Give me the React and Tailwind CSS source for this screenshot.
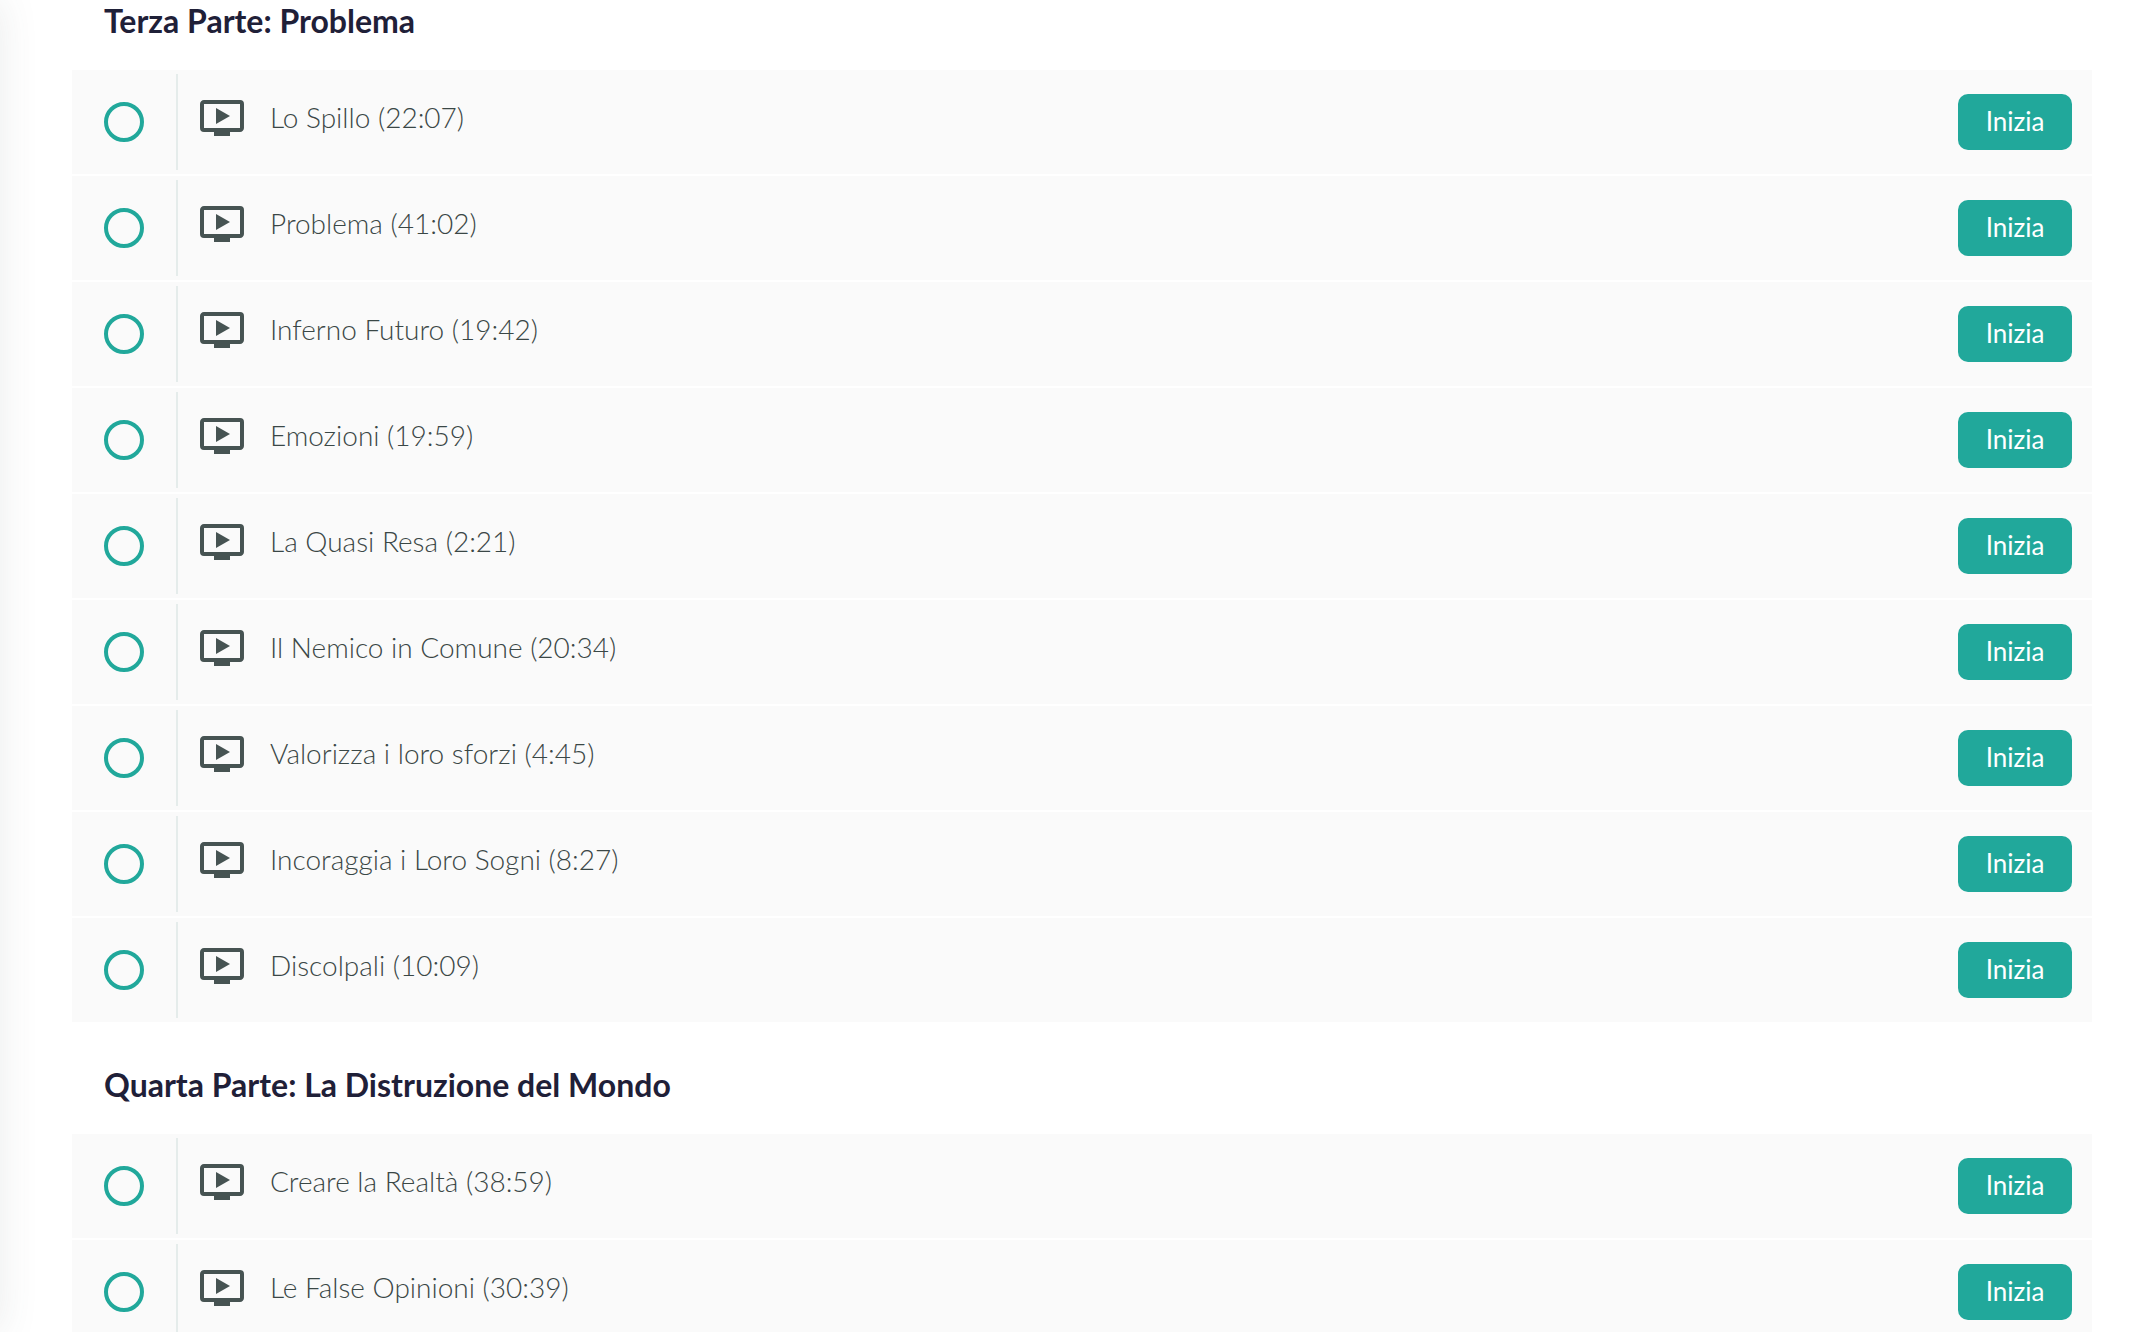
import React from "react";
import { MdOndemandVideo } from "react-icons/md";

const sections = [
  {
    title: "Terza Parte: Problema",
    lectures: [
      { name: "Lo Spillo", duration: "22:07" },
      { name: "Problema", duration: "41:02" },
      { name: "Inferno Futuro", duration: "19:42" },
      { name: "Emozioni", duration: "19:59" },
      { name: "La Quasi Resa", duration: "2:21" },
      { name: "Il Nemico in Comune", duration: "20:34" },
      { name: "Valorizza i loro sforzi", duration: "4:45" },
      { name: "Incoraggia i Loro Sogni", duration: "8:27" },
      { name: "Discolpali", duration: "10:09" },
    ],
  },
  {
    title: "Quarta Parte: La Distruzione del Mondo",
    lectures: [
      { name: "Creare la Realtà", duration: "38:59" },
      { name: "Le False Opinioni", duration: "30:39" },
    ],
  },
];

const LectureRow = ({ lecture }) => {
  return (
    <li className="flex h-[104px] bg-[#fafafa] py-1 pr-5">
      <div className="flex w-[106px] shrink-0 items-center border-r-2 border-[#e5eceb] pl-8">
        <span className="h-10 w-10 rounded-full border-4 border-[#21a89b]" />
      </div>
      <a href="#" className="flex flex-1 items-center gap-6 pb-2 pl-5 text-[#465352]">
        <MdOndemandVideo className="h-12 w-12 shrink-0" />
        <span className="pb-[2px] text-[28px] leading-9 font-light text-[#3a4746]">
          {lecture.name} ({lecture.duration})
        </span>
      </a>
      <button
        type="button"
        className="h-14 w-[114px] shrink-0 self-center rounded-[10px] bg-[#21a89b] pb-[2px] text-[26px] leading-8 text-white"
      >
        Inizia
      </button>
    </li>
  );
};

const Section = ({ section }) => {
  return (
    <section>
      <h2 className="flex h-28 items-center pt-[14px] pl-8 text-[32px] leading-10 font-bold text-[#1f2038]">
        {section.title}
      </h2>
      <ul className="flex flex-col gap-[2px]">
        {section.lectures.map((lecture) => (
          <LectureRow key={lecture.name} lecture={lecture} />
        ))}
      </ul>
    </section>
  );
};

const App = () => {
  return (
    <div className="flex h-screen overflow-hidden bg-white font-['Lato',sans-serif]">
      {/* edge of the sidebar, only its shadow shows */}
      <aside className="-ml-20 w-20 shrink-0 shadow-[0_0_40px_0_rgba(70,83,82,0.11)]" />
      <main className="-mt-[42px] flex-1 pr-[58px] pl-[72px]">
        {sections.map((section) => (
          <Section key={section.title} section={section} />
        ))}
      </main>
    </div>
  );
};

export default App;
